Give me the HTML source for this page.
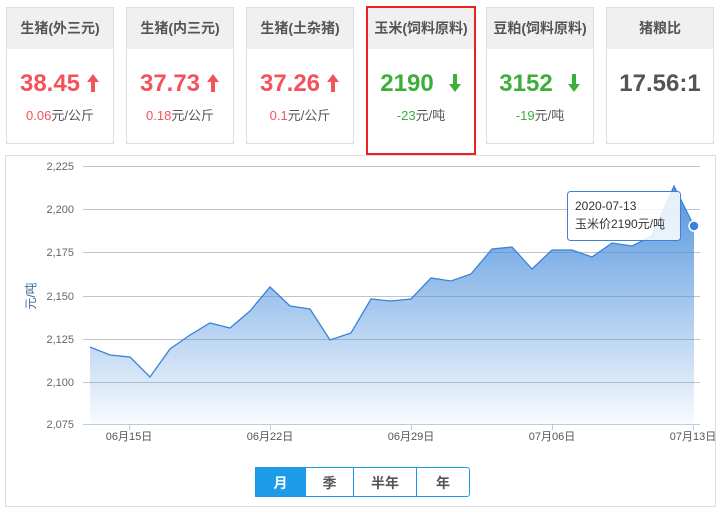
<!DOCTYPE html>
<html><head><meta charset="utf-8"><style>
body{margin:0;width:722px;height:510px;background:#fff;font-family:"Liberation Sans","Noto Sans CJK SC",sans-serif;position:relative;overflow:hidden}
.card{position:absolute;top:7px;width:106px;height:135px;border:1px solid #ddd;background:#fff}
.card .h{height:41px;background:#f0f0f0;text-align:center;line-height:41px;font-size:14px;font-weight:bold;color:#555}
.card .v{text-align:center;margin-top:20px;font-size:24px;font-weight:bold;height:30px;line-height:30px}
.card .s{text-align:center;font-size:13px;color:#555;margin-top:6px}
.r{color:#f4525b}.g{color:#3cae3a}
.sel{border:2px solid #e8231f;top:6px;height:145px;left:366px}
.btn{position:absolute;top:467px;height:30px;line-height:30px;text-align:center;font-size:14px;font-weight:bold;color:#555;border:1px solid #1e9be8;box-sizing:border-box;background:#fff}
svg.ar{vertical-align:-2px;margin-left:6px}
</style></head><body>
<div class="card" style="left:6px"><div class="h">生猪(外三元)</div><div class="v r">38.45<svg class="ar" width="14" height="20" viewBox="0 0 14 20"><path d="M7,1 L13,9 L9,9 L9,19 L5,19 L5,9 L1,9Z" fill="#f4525b"/></svg></div><div class="s"><span class="r">0.06</span>元/公斤</div></div>
<div class="card" style="left:126px"><div class="h">生猪(内三元)</div><div class="v r">37.73<svg class="ar" width="14" height="20" viewBox="0 0 14 20"><path d="M7,1 L13,9 L9,9 L9,19 L5,19 L5,9 L1,9Z" fill="#f4525b"/></svg></div><div class="s"><span class="r">0.18</span>元/公斤</div></div>
<div class="card" style="left:246px"><div class="h">生猪(土杂猪)</div><div class="v r">37.26<svg class="ar" width="14" height="20" viewBox="0 0 14 20"><path d="M7,1 L13,9 L9,9 L9,19 L5,19 L5,9 L1,9Z" fill="#f4525b"/></svg></div><div class="s"><span class="r">0.1</span>元/公斤</div></div>
<div class="card sel"><div class="h">玉米(饲料原料)</div><div class="v g">2190<svg class="ar" style="margin-left:14px" width="14" height="20" viewBox="0 0 14 20"><path d="M7,19 L13,11 L9,11 L9,1 L5,1 L5,11 L1,11Z" fill="#3cae3a"/></svg></div><div class="s"><span class="g">-23</span>元/吨</div></div>
<div class="card" style="left:486px"><div class="h">豆粕(饲料原料)</div><div class="v g">3152<svg class="ar" style="margin-left:14px" width="14" height="20" viewBox="0 0 14 20"><path d="M7,19 L13,11 L9,11 L9,1 L5,1 L5,11 L1,11Z" fill="#3cae3a"/></svg></div><div class="s"><span class="g">-19</span>元/吨</div></div>
<div class="card" style="left:606px"><div class="h">猪粮比</div><div class="v" style="color:#555">17.56:1</div></div>
<div style="position:absolute;left:5px;top:155px;width:711px;height:352px;border:1px solid #ddd;box-sizing:border-box"></div>
<svg style="position:absolute;left:0;top:0" width="722" height="510">
<defs><linearGradient id="gr" gradientUnits="userSpaceOnUse" x1="0" y1="186" x2="0" y2="424"><stop offset="0" stop-color="#4a8fdc" stop-opacity=".95"/><stop offset="1" stop-color="#4a8fdc" stop-opacity=".04"/></linearGradient></defs>
<g stroke="#c4c4c4" stroke-width="1">
<line x1="83" y1="166.5" x2="700" y2="166.5"/><line x1="83" y1="209.5" x2="700" y2="209.5"/><line x1="83" y1="252.5" x2="700" y2="252.5"/><line x1="83" y1="296.5" x2="700" y2="296.5"/><line x1="83" y1="339.5" x2="700" y2="339.5"/><line x1="83" y1="382.5" x2="700" y2="382.5"/></g>
<g font-size="11" fill="#666" text-anchor="end">
<text x="74" y="170">2,225</text><text x="74" y="213">2,200</text><text x="74" y="256">2,175</text><text x="74" y="300">2,150</text><text x="74" y="343">2,125</text><text x="74" y="386">2,100</text><text x="74" y="428">2,075</text></g>
<text transform="translate(35,296) rotate(-90)" font-size="12" fill="#44689a" text-anchor="middle">元/吨</text>
<path d="M90,347 L110,355 L130,357 L150,377 L170,349 L190,335 L210,323 L230,328 L250,311 L270,287 L290,306 L310,309 L330,340 L351,333 L371,299 L391,301 L411,299 L431,278 L451,281 L471,274 L492,249 L512,247 L532,269 L552,250 L572,250 L592,257 L612,243 L632,246 L652,236 L674,186 L694,226 L694,424 L90,424Z" fill="url(#gr)"/>
<path d="M90,347 L110,355 L130,357 L150,377 L170,349 L190,335 L210,323 L230,328 L250,311 L270,287 L290,306 L310,309 L330,340 L351,333 L371,299 L391,301 L411,299 L431,278 L451,281 L471,274 L492,249 L512,247 L532,269 L552,250 L572,250 L592,257 L612,243 L632,246 L652,236 L674,186 L694,226" fill="none" stroke="#3b82d8" stroke-width="1.3"/>
<line x1="83" y1="424.5" x2="700" y2="424.5" stroke="#b8cde4"/>
<g stroke="#b8cde4"><line x1="129.5" y1="424" x2="129.5" y2="430"/><line x1="270.5" y1="424" x2="270.5" y2="430"/><line x1="411.5" y1="424" x2="411.5" y2="430"/><line x1="552.5" y1="424" x2="552.5" y2="430"/><line x1="693.5" y1="424" x2="693.5" y2="430"/></g>
<g font-size="11" fill="#555" text-anchor="middle"><text x="129" y="440">06月15日</text><text x="270" y="440">06月22日</text><text x="411" y="440">06月29日</text><text x="552" y="440">07月06日</text><text x="693" y="440">07月13日</text></g>
<circle cx="694" cy="226" r="5" fill="#3b82d8" stroke="#fff" stroke-width="1.5"/>
<rect x="567.5" y="191.5" width="113" height="49" rx="3" fill="#fff" fill-opacity=".85" stroke="#3b82d8"/>
<text x="575" y="210" font-size="12" fill="#333">2020-07-13</text>
<text x="575" y="228" font-size="12" fill="#333">玉米价2190元/吨</text>
</svg>
<div class="btn" style="left:255px;width:51px;background:#1e9be8;color:#fff">月</div>
<div class="btn" style="left:305px;width:49px">季</div>
<div class="btn" style="left:353px;width:64px">半年</div>
<div class="btn" style="left:416px;width:54px;border-radius:0 3px 3px 0">年</div>
</body></html>
